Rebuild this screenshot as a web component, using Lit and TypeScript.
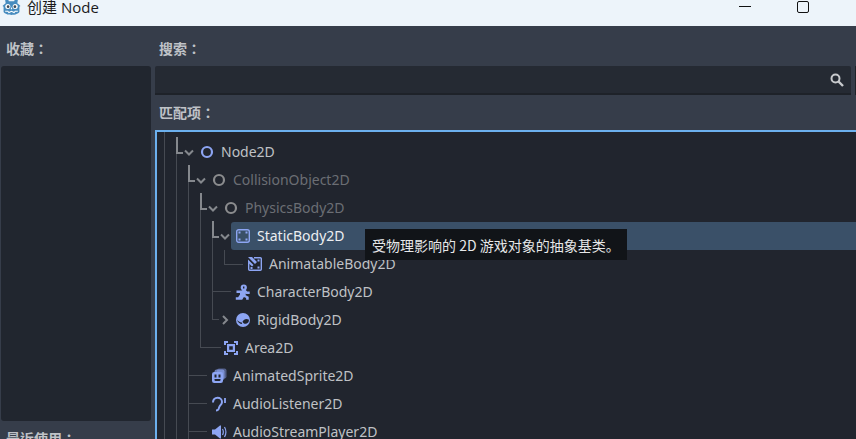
import { LitElement, html, css, svg } from "lit";
import { customElement } from "lit/decorators.js";

const BLUE = "#8da5f3";
const DARK = "#21252e";

const icons: Record<string, unknown> = {
  node: svg`<circle cx="8" cy="8" r="5" fill="none" stroke="${BLUE}" stroke-width="2.200"/>`,
  nodeDim: svg`<circle cx="8" cy="8" r="5" fill="none" stroke="#8b8c8e" stroke-width="2.200"/>`,
  staticBody: svg`<rect x="1.700" y="1.700" width="12.600" height="12.600" rx="2" fill="none" stroke="${BLUE}" stroke-width="1.400"/>
    <rect x="3.500" y="3.500" width="2" height="2" fill="${BLUE}"/><rect x="10.500" y="3.500" width="2" height="2" fill="${BLUE}"/>
    <rect x="3.500" y="10.500" width="2" height="2" fill="${BLUE}"/><rect x="10.500" y="10.500" width="2" height="2" fill="${BLUE}"/>`,
  animatable: svg`<path d="M1.700 6.500v6.800a1 1 0 0 0 1 1h10.600a1 1 0 0 0 1-1V2.700a1 1 0 0 0-1-1H7" fill="none" stroke="${BLUE}" stroke-width="1.400"/>
    <path d="M1 1h4l5 5-2 2zM1 3.500l5.500 5.500-1.500 1.500L1 6.500z" fill="${BLUE}"/>
    <rect x="10.500" y="3.500" width="2" height="2" fill="${BLUE}"/><rect x="3.500" y="11" width="2" height="2" fill="${BLUE}"/><rect x="10.500" y="10.500" width="2" height="2" fill="${BLUE}"/>`,
  character: svg`<circle cx="8.800" cy="3.500" r="3.100" fill="${BLUE}"/><rect x="8" y="2.500" width="1.400" height="2" fill="${DARK}"/>
    <path d="M1.500 6.500h5l1-.5h3.200l1.500 1.500h2.500v2.400h-3.400l-.6-.5v1.800l3 1.500v3.100h-2.600v-1.700l-2.200-1-1.700 2.700H.8v-2.600h2.300L5 10.500V9H1.500z" fill="${BLUE}"/>`,
  rigid: svg`<circle cx="8" cy="8" r="7" fill="${BLUE}"/>
    <path d="M7.500 9.800c1.500-2.800 3.800-3.300 6.500-2 .1 2.200-1.300 3.600-3 4-1.500.300-3-.500-3.500-2z" fill="${DARK}"/>
    <path d="M2 7.500c1 1.700 2.800 2.800 4.800 3l.4 1.500C4.800 12 2.600 10.400 2 7.500z" fill="${DARK}"/>`,
  area: svg`<path d="M1 1h4v2H3v2H1zM11 1h4v4h-2V3h-2zM1 11h2v2h2v2H1zM13 11h2v4h-4v-2h2z" fill="${BLUE}"/>
    <path fill-rule="evenodd" d="M4 4h8v8H4zM6.200 6.200v3.600h3.600V6.200z" fill="${BLUE}"/>`,
  sprite: svg`<rect x="6" y="0.500" width="9.500" height="10" rx="2" fill="${BLUE}" opacity=".45"/>
    <rect x="3.500" y="1.500" width="10" height="10.500" rx="2" fill="${BLUE}" opacity=".7"/>
    <rect x="1" y="4" width="11" height="11" rx="2.200" fill="${BLUE}"/>
    <rect x="3.500" y="6.500" width="2" height="3" fill="${DARK}"/><rect x="7.500" y="6.500" width="2" height="3" fill="${DARK}"/>
    <path d="M3.500 11h6v1a1 1 0 0 1-1 1h-4a1 1 0 0 1-1-1z" fill="${DARK}"/>`,
  listener: svg`<path d="M2 6.500C2 3.500 4 1.700 6.500 1.700S11 3.500 11 6c0 2-1.300 2.800-2.200 4-.7 1-.9 2.200-1.300 3.200-.4.9-1.300 1.300-2.500 1.300" fill="none" stroke="${BLUE}" stroke-width="2"/>
    <path d="M14 2v5" fill="none" stroke="${BLUE}" stroke-width="1.800"/>`,
  stream: svg`<path d="M1 5.500h3L9 1.500h1v13H9l-5-4H1z" fill="${BLUE}"/>
    <path d="M11.500 5c1 1.800 1 4.200 0 6M13.500 3c1.700 3 1.700 7 0 10" fill="none" stroke="${BLUE}" stroke-width="1.200"/>`,
};

type Row = { name: string; icon: string; depth: number; arrow?: "down" | "right"; dim?: boolean; selected?: boolean };

const rows: Row[] = [
  { name: "Node2D", icon: "node", depth: 0, arrow: "down" },
  { name: "CollisionObject2D", icon: "nodeDim", depth: 1, arrow: "down", dim: true },
  { name: "PhysicsBody2D", icon: "nodeDim", depth: 2, arrow: "down", dim: true },
  { name: "StaticBody2D", icon: "staticBody", depth: 3, arrow: "down", selected: true },
  { name: "AnimatableBody2D", icon: "animatable", depth: 4 },
  { name: "CharacterBody2D", icon: "character", depth: 3 },
  { name: "RigidBody2D", icon: "rigid", depth: 3, arrow: "right" },
  { name: "Area2D", icon: "area", depth: 2 },
  { name: "AnimatedSprite2D", icon: "sprite", depth: 1 },
  { name: "AudioListener2D", icon: "listener", depth: 1 },
  { name: "AudioStreamPlayer2D", icon: "stream", depth: 1 },
];

// Guide lines in page coordinates: [x, y, w, h]
const thin: number[][] = [
  [164, 132, 1, 307],
  [176, 153, 1, 286],
  [188, 181, 1, 258],
  [200, 209, 1, 138],
  [212, 237, 1, 83],
  [224, 250, 1, 14],
  [224, 264, 19, 1],
  [212, 291, 19, 1],
  [212, 319, 7, 1],
  [200, 347, 21, 1],
  [189, 375, 18, 1],
  [189, 403, 18, 1],
  [189, 431, 18, 1],
];
const thick: number[][] = [
  [176, 137, 2, 16],
  [176, 152, 7, 2],
  [188, 165, 2, 16],
  [188, 180, 7, 2],
  [200, 193, 2, 16],
  [200, 208, 7, 2],
  [212, 221, 2, 16],
  [212, 236, 7, 2],
];

@customElement("app-root")
export class AppRoot extends LitElement {
  static styles = css`
    :host {
      display: block;
      position: relative;
      width: 856px;
      height: 439px;
      overflow: hidden;
      background: #363d4a;
      font-family: "Noto Sans", "Noto Sans CJK SC", sans-serif;
      font-size: 14px;
    }
    .titlebar {
      height: 26px;
      background: #edf4fa;
      display: flex;
      align-items: flex-start;
      overflow: hidden;
    }
    .logo { width: 19px; height: 19px; margin: -3px 0 0 2px; flex: none; }
    .title {
      margin-left: 6px;
      margin-top: -3px;
      font-family: "Open Sans", "Noto Sans CJK SC", sans-serif;
      font-size: 15px;
      line-height: 20px;
      color: #1a1a1a;
      white-space: pre;
    }
    .winbtns { margin-left: auto; display: flex; align-items: flex-start; }
    .min { width: 12px; height: 1px; background: #111; margin-top: 6px; }
    .max {
      width: 10px; height: 10px; border: 1px solid #111; border-radius: 2px;
      margin: 1px 47px 0 46px;
    }
    .body { display: flex; gap: 4px; padding-left: 1px; height: 413px; }
    .left { width: 150px; flex: none; display: flex; flex-direction: column; }
    .right { width: 705px; flex: none; display: flex; flex-direction: column; }
    .label {
      color: #bfc2c7;
      font-family: "Noto Sans CJK TC", sans-serif;
      font-weight: 700;
      font-size: 14px;
      padding-left: 5px;
      display: flex;
      align-items: center;
      flex: none;
    }
    .right .label { padding-left: 4px; }
    .fav-label { height: 40px; padding-top: 3px; box-sizing: border-box; }
    .panel { height: 355px; background: #21262f; border-radius: 3px; flex: none; }
    .recent-label { height: 30px; padding-top: 2px; }
    .search-row { display: flex; gap: 4px; height: 29px; flex: none; }
    .search {
      width: 696px;
      box-sizing: border-box;
      background: #252a33;
      border-bottom: 2px solid #1e2229;
      display: flex;
      align-items: center;
      justify-content: flex-end;
      padding-right: 6px;
      border-radius: 2px 2px 0 0;
    }
    .search svg { width: 16px; height: 16px; display: block; }
    .sliver { flex: 1; background: #1e2229; }
    .match-label { height: 35px; padding-bottom: 1px; box-sizing: border-box; }
    .tree {
      position: relative;
      flex: 1;
      background: #21252e;
      border: 2px solid #6cb0ee;
      border-bottom: none;
      padding-top: 6px;
      overflow: hidden;
    }
    .guides { position: absolute; left: 0; top: 0; width: 699px; height: 307px; }
    .row { position: relative; display: flex; height: 28px; align-items: stretch; }
    .arrow { width: 12px; flex: none; display: flex; align-items: center; justify-content: center; }
    .arrow svg { width: 12px; height: 12px; display: block; }
    .item {
      flex: 1;
      display: flex;
      align-items: center;
      gap: 6px;
      padding-left: 4px;
      color: #bfc1c5;
      border-radius: 3px 0 0 3px;
      white-space: nowrap;
    }
    .item svg { width: 16px; height: 16px; flex: none; display: block; }
    .item span { margin-bottom: 2px; }
    .item.dim { color: #6b6e74; }
    .item.selected { background: #3a5068; color: #eceef1; }
    .tooltip {
      position: absolute;
      left: 365px;
      top: 229px;
      width: 262px;
      height: 31px;
      box-sizing: border-box;
      padding-left: 7px;
      display: flex;
      align-items: center;
      background: #111418;
      color: #e6e7e8;
      font-family: "Noto Sans CJK SC", sans-serif;
      font-size: 14px;
      white-space: pre;
    }
  `;

  private renderArrow(dir?: "down" | "right") {
    if (!dir) return null;
    const d = dir === "down" ? "M2 4.500 6 8.500 10 4.500" : "M4 2 8 6 4 10";
    return html`<svg viewBox="0 0 12 12"><path d="${d}" fill="none" stroke="#85888d" stroke-width="2"/></svg>`;
  }

  render() {
    return html`
      <div class="titlebar">
        <svg class="logo" viewBox="0 0 18 18">
          <path d="M3 3 5.500 1.500l1 2.500h5l1-2.500L15 3l-.5 3c1.200 1 2.500 2 3 2.500l-1 .8v5c-2 2.500-5.500 2.700-7.500 2.700s-5.500-.2-7.500-2.700v-5l-1-.8C1 8 2.300 7 3.500 6z" fill="#478cbf"/>
          <circle cx="5.500" cy="9" r="2.400" fill="#fff"/><circle cx="12.500" cy="9" r="2.400" fill="#fff"/>
          <circle cx="5.800" cy="9.200" r="1.300" fill="#3d4a57"/><circle cx="12.200" cy="9.200" r="1.300" fill="#3d4a57"/>
          <rect x="8.400" y="10" width="1.200" height="1.600" fill="#fff"/>
          <path d="M3 13.500h2.500l1 1.200L9 13.500l2.500 1.200 1-1.200H15" fill="none" stroke="#fff" stroke-width="1"/>
        </svg>
        <span class="title">创建 Node</span>
        <div class="winbtns"><div class="min"></div><div class="max"></div></div>
      </div>
      <div class="body">
        <div class="left">
          <div class="label fav-label">收藏：</div>
          <div class="panel"></div>
          <div class="label recent-label">最近使用：</div>
        </div>
        <div class="right">
          <div class="label fav-label">搜索：</div>
          <div class="search-row">
            <div class="search">
              <svg viewBox="0 0 16 16">
                <circle cx="6.500" cy="6.500" r="4" fill="none" stroke="#c8cacd" stroke-width="2"/>
                <path d="M9.500 9.500 14 14" stroke="#c8cacd" stroke-width="2.400"/>
              </svg>
            </div>
            <div class="sliver"></div>
          </div>
          <div class="label match-label">匹配项：</div>
          <div class="tree">
            <svg class="guides" viewBox="157 132 699 307" shape-rendering="crispEdges">
              ${thin.map((r) => svg`<rect x="${r[0]}" y="${r[1]}" width="${r[2]}" height="${r[3]}" fill="#464a52"/>`)}
              ${thick.map((r) => svg`<rect x="${r[0]}" y="${r[1]}" width="${r[2]}" height="${r[3]}" fill="#85888d"/>`)}
            </svg>
            ${rows.map(
              (r) => html`
                <div class="row" style="padding-left:${26 + 12 * r.depth}px">
                  <div class="arrow">${this.renderArrow(r.arrow)}</div>
                  <div class="item ${r.dim ? "dim" : ""} ${r.selected ? "selected" : ""}">
                    <svg viewBox="0 0 16 16">${icons[r.icon]}</svg>
                    <span>${r.name}</span>
                  </div>
                </div>
              `
            )}
          </div>
        </div>
      </div>
      <div class="tooltip">受物理影响的 2D 游戏对象的抽象基类。</div>
    `;
  }
}
